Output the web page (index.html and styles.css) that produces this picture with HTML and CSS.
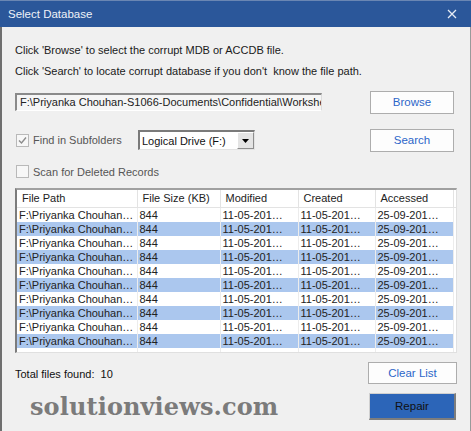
FILE: index.html
```html
<!DOCTYPE html>
<html>
<head>
<meta charset="utf-8">
<link rel="stylesheet" href="styles.css">
</head>
<body>
<div class="window">
  <div class="titlebar">
    <span class="title">Select Database</span>
    <svg class="close" width="10" height="10" viewBox="0 0 10 10"><path d="M1 1L9 9M9 1L1 9" stroke="#e6ecf5" stroke-width="1.3"/></svg>
  </div>
  <div class="body">
    <p class="hint hint-first">Click 'Browse' to select the corrupt MDB or ACCDB file.</p>
    <p class="hint">Click 'Search' to locate corrupt database if you don't&nbsp; know the file path.</p>

    <div class="row row-path">
      <div class="path-input"><span class="path-text">F:\Priyanka Chouhan-S1066-Documents\Confidential\Workshe</span></div>
      <button class="btn">Browse</button>
    </div>

    <div class="row row-search">
      <div class="left-group">
        <label class="check">
          <span class="box"><svg width="11" height="11" viewBox="0 0 11 11"><path d="M2 5.5L4.5 8L9 2.5" fill="none" stroke="#8c8c8c" stroke-width="1.4"/></svg></span>
          <span>Find in Subfolders</span>
        </label>
        <div class="select">
          <span class="select-text">Logical Drive (F:)</span>
          <span class="select-arrow"><svg width="7" height="4" viewBox="0 0 7 4"><path d="M0 0H7L3.5 4Z" fill="#000"/></svg></span>
        </div>
      </div>
      <button class="btn">Search</button>
    </div>

    <label class="check check-scan">
      <span class="box"></span>
      <span>Scan for Deleted Records</span>
    </label>

    <div class="grid-wrap">
      <table class="grid">
        <colgroup>
          <col class="c1"><col class="c2"><col class="c3"><col class="c4"><col class="c5"><col class="c6">
        </colgroup>
        <thead>
          <tr><th>File Path</th><th>File Size (KB)</th><th>Modified</th><th>Created</th><th>Accessed</th><th></th></tr>
        </thead>
        <tbody>
          <tr><td>F:\Priyanka Chouhan…</td><td>844</td><td>11-05-201…</td><td>11-05-201…</td><td>25-09-201…</td><td></td></tr>
          <tr class="sel"><td>F:\Priyanka Chouhan…</td><td>844</td><td>11-05-201…</td><td>11-05-201…</td><td>25-09-201…</td><td></td></tr>
          <tr><td>F:\Priyanka Chouhan…</td><td>844</td><td>11-05-201…</td><td>11-05-201…</td><td>25-09-201…</td><td></td></tr>
          <tr class="sel"><td>F:\Priyanka Chouhan…</td><td>844</td><td>11-05-201…</td><td>11-05-201…</td><td>25-09-201…</td><td></td></tr>
          <tr><td>F:\Priyanka Chouhan…</td><td>844</td><td>11-05-201…</td><td>11-05-201…</td><td>25-09-201…</td><td></td></tr>
          <tr class="sel"><td>F:\Priyanka Chouhan…</td><td>844</td><td>11-05-201…</td><td>11-05-201…</td><td>25-09-201…</td><td></td></tr>
          <tr><td>F:\Priyanka Chouhan…</td><td>844</td><td>11-05-201…</td><td>11-05-201…</td><td>25-09-201…</td><td></td></tr>
          <tr class="sel"><td>F:\Priyanka Chouhan…</td><td>844</td><td>11-05-201…</td><td>11-05-201…</td><td>25-09-201…</td><td></td></tr>
          <tr><td>F:\Priyanka Chouhan…</td><td>844</td><td>11-05-201…</td><td>11-05-201…</td><td>25-09-201…</td><td></td></tr>
          <tr class="sel"><td>F:\Priyanka Chouhan…</td><td>844</td><td>11-05-201…</td><td>11-05-201…</td><td>25-09-201…</td><td></td></tr>
          <tr class="filler"><td></td><td></td><td></td><td></td><td></td><td></td></tr>
        </tbody>
      </table>
    </div>

    <div class="footer">
      <div class="footer-left">
        <div class="total">Total files found:&nbsp; 10</div>
        <div class="watermark">solutionviews.com</div>
      </div>
      <div class="footer-right">
        <button class="btn btn-clear">Clear List</button>
        <button class="btn-repair">Repair</button>
      </div>
    </div>
  </div>
</div>
</body>
</html>
```
FILE: styles.css
```css
* { box-sizing: border-box; }
html, body { margin: 0; padding: 0; }
body {
  width: 471px;
  height: 431px;
  overflow: hidden;
  background: #f0f0f0;
  font-family: "Liberation Sans", Arial, sans-serif;
  font-size: 11px;
  color: #1a1a1a;
}
.window {
  width: 471px;
  height: 431px;
  display: flex;
  flex-direction: column;
}
.titlebar {
  height: 27px;
  background: #2b579a;
  border-top: 1px solid #6a86b3;
  display: flex;
  align-items: center;
  justify-content: space-between;
  padding: 0 14px 0 8px;
  color: #eef2f8;
  flex: none;
}
.title { font-size: 11.5px; }
.close { display: block; }
.body {
  flex: 1;
  border-left: 2px solid #6f6f6f;
  border-right: 1px solid #9a9a9a;
  padding: 0 13px 0 13px;
  display: flex;
  flex-direction: column;
}
.hint { margin: 0; line-height: 21px; }
.hint-first { margin-top: 13px; }

.row {
  display: flex;
  justify-content: space-between;
  align-items: center;
  padding-right: 3px;
}
.row-path { margin-top: 8px; height: 24px; }
.path-input {
  width: 307px;
  height: 18px;
  background: #f5f5f5;
  border-top: 2px solid #8a8a8a;
  border-left: 2px solid #8a8a8a;
  border-right: 1px solid #dcdcdc;
  border-bottom: 1px solid #fff;
  overflow: hidden;
  padding-left: 3px;
  line-height: 15px;
  color: #222;
}
.path-text {
  display: block;
  white-space: nowrap;
  overflow: hidden;
}
.btn {
  width: 84px;
  height: 23px;
  background: #fdfdfd;
  border: 1px solid #adadad;
  color: #2c66c9;
  font-family: "Liberation Sans", Arial, sans-serif;
  font-size: 11.5px;
  padding: 0;
}
.row-search { margin-top: 14px; height: 24px; }
.left-group { display: flex; align-items: center; }
.check {
  display: flex;
  align-items: center;
  gap: 4px;
  color: #555;
}
.box {
  width: 13px;
  height: 13px;
  border: 1px solid #b9b9b9;
  background: #f7f7f7;
  display: flex;
  align-items: center;
  justify-content: center;
}
.box svg { display: block; }
.row-search .check { margin-left: 1px; width: 122px; }
.select {
  width: 117px;
  height: 20px;
  background: #fff;
  border-top: 2px solid #7a7a7a;
  border-left: 2px solid #7a7a7a;
  border-right: 1px solid #e3e3e3;
  border-bottom: 1px solid #e3e3e3;
  display: flex;
  align-items: center;
  justify-content: space-between;
}
.select-text { padding-left: 2px; color: #111; }
.select-arrow {
  width: 17px;
  height: 17px;
  background: #e4e4e4;
  border-top: 1px solid #fff;
  border-left: 1px solid #fff;
  border-right: 1px solid #8d8d8d;
  border-bottom: 1px solid #8d8d8d;
  display: flex;
  align-items: center;
  justify-content: center;
}
.select-arrow svg { display: block; }
.check-scan { margin-top: 12px; margin-left: 1px; height: 15px; }

.grid-wrap {
  margin-top: 9px;
  width: 442px;
  height: 165px;
  background: #fff;
  border-top: 2px solid #a0a0a0;
  border-left: 2px solid #7c7c7c;
  border-right: 1px solid #e0e0e0;
  border-bottom: 1px solid #e0e0e0;
  overflow: hidden;
}
.grid {
  border-collapse: collapse;
  table-layout: fixed;
  width: 439px;
  height: 162px;
}
.c1 { width: 120px; }
.c2 { width: 83px; }
.c3 { width: 78px; }
.c4 { width: 77px; }
.c5 { width: 78px; }
.c6 { width: 3px; }
.grid th {
  height: 17px;
  text-align: left;
  font-weight: normal;
  padding: 0 0 0 5px;
  border-right: 1px solid #e3e3e3;
  border-bottom: 1px solid #e3e3e3;
  color: #222;
  white-space: nowrap;
  overflow: hidden;
  font-size: 11px;
}
.grid td {
  height: 14px;
  padding: 0 0 0 2px;
  border-right: 1px solid #ececec;
  white-space: nowrap;
  overflow: hidden;
  line-height: 14px;
  color: #222;
  font-size: 11px;
}
.grid tr.sel td { background: #abc7ee; }
.grid tr.sel td:last-child { background: #fff; }
.grid tr.filler td { height: auto; }

.footer {
  display: flex;
  justify-content: space-between;
  margin-top: 9px;
}
.footer-left { display: flex; flex-direction: column; }
.total { margin-top: 5px; color: #111; line-height: 14px; }
.watermark {
  margin-top: 12px;
  margin-left: 15px;
  font-family: "DejaVu Serif", "Liberation Serif", serif;
  font-weight: bold;
  font-size: 24px;
  letter-spacing: 0.1px;
  color: #7b7b7b;
  line-height: 28px;
}
.footer-right {
  display: flex;
  flex-direction: column;
  align-items: flex-end;
}
.btn-clear { width: 89px; height: 22px; }
.btn-repair {
  margin-top: 9px;
  margin-right: 1px;
  width: 87px;
  height: 27px;
  background: #2c65b8;
  border-top: 1px solid #d0d0d0;
  border-left: 1px solid #d0d0d0;
  border-right: 2px solid #7d7d7d;
  border-bottom: 2px solid #7d7d7d;
  color: #111;
  font-family: "Liberation Sans", Arial, sans-serif;
  font-size: 11.5px;
  padding: 0;
}
```
